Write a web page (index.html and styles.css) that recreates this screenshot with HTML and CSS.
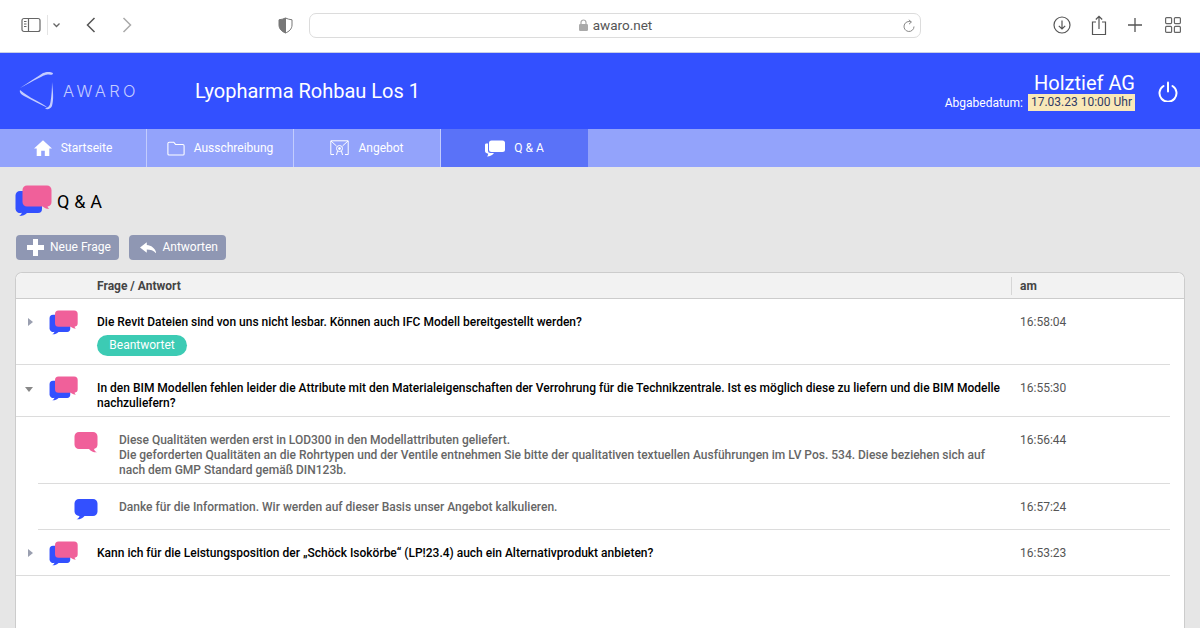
FILE: index.html
```html
<!DOCTYPE html>
<html lang="de">
<head>
<meta charset="utf-8">
<title>AWARO</title>
<link rel="stylesheet" href="styles.css">
</head>
<body>
<svg class="defs" width="0" height="0" aria-hidden="true">
  <defs>
    <symbol id="pink" viewBox="0 0 24 22"><path fill="#f0609a" d="M5 0h14a4.500 4.500 0 0 1 4.500 4.500v8a4.500 4.500 0 0 1-3.500 4.400c.3 1.400 1.400 2.600 3 3.400-3 .3-6-.8-8-3.300H5A4.500 4.500 0 0 1 .5 12.500v-8A4.500 4.500 0 0 1 5 0z"/></symbol>
    <symbol id="blue" viewBox="0 0 24 22"><path fill="#3350ff" d="M5 0h14a4.500 4.500 0 0 1 4.500 4.500v8A4.500 4.500 0 0 1 19 17h-8.500c-2 2.500-5 3.600-8 3.300 1.600-.8 2.700-2 3-3.400A4.500 4.500 0 0 1 .5 12.500v-8A4.500 4.500 0 0 1 5 0z"/></symbol>
    <symbol id="duo" viewBox="0 0 38 32">
      <path fill="#3350ff" d="M5 6h18a4 4 0 0 1 4 4v14a4 4 0 0 1-4 4H12c-2 2-5 3.200-8 3 1.500-.8 2.500-2 2.800-3.300A4.500 4.500 0 0 1 .5 24V10.500A4.500 4.500 0 0 1 5 6z"/>
      <path fill="#f0609a" d="M12 .5h20a4.500 4.500 0 0 1 4.500 4.500v12a4.500 4.500 0 0 1-4 4.400c.2 1 .8 1.700 1.800 2.400-2.500.2-4.800-.7-6.500-2.300H12A4.500 4.500 0 0 1 7.500 17V5A4.500 4.500 0 0 1 12 .5z"/>
    </symbol>
  </defs>
</svg>

<div class="browser">
  <div class="browser-left">
    <svg class="bi" width="20" height="16" viewBox="0 0 20 16" fill="none" stroke="#666" stroke-width="1.200"><rect x="1" y="1.500" width="18" height="13" rx="2"/><path d="M7.500 1.500v13"/><path d="M3 4.500h2.500M3 7h2.500M3 9.500h2.500" stroke-width="1"/></svg>
    <span class="bdiv"></span>
    <svg width="9" height="6" viewBox="0 0 9 6" fill="none" stroke="#666" stroke-width="1.300"><path d="M1.500 1.500 4.500 4.500 7.500 1.500"/></svg>
    <svg class="back" width="10" height="16" viewBox="0 0 10 16" fill="none" stroke="#555" stroke-width="1.500"><path d="M8.500 1 1.500 8l7 7"/></svg>
    <svg class="fwd" width="10" height="16" viewBox="0 0 10 16" fill="none" stroke="#aaa" stroke-width="1.500"><path d="M1.500 1l7 7-7 7"/></svg>
  </div>
  <svg class="shield" width="15" height="17" viewBox="0 0 15 17"><path fill="#777" stroke="#777" stroke-width="1" d="M7.500 1C5.500 2 3.500 2.500 1 2.800V8c0 4 3 6.500 6.500 8z"/><path fill="#fff" stroke="#777" stroke-width="1" d="M7.500 1c2 1 4 1.500 6.500 1.800V8c0 4-3 6.500-6.500 8z"/></svg>
  <div class="url">
    <span class="url-text"><svg class="lock" width="9" height="12" viewBox="0 0 9 12"><path fill="none" stroke="#aaa" stroke-width="1.200" d="M2 5.500V3.500a2.500 2.500 0 0 1 5 0v2"/><rect y="5" width="9" height="7" rx="1.200" fill="#aaa"/></svg>awaro.net</span>
    <svg class="reload" width="12" height="14" viewBox="0 0 12 14" fill="none" stroke="#888" stroke-width="1"><path d="M8.200 3A5 5 0 1 0 11 7.500"/><path d="M5.800 .8 8.400 3 6 5.200"/></svg>
  </div>
  <div class="browser-right">
    <svg class="ic-dl" width="18" height="18" viewBox="0 0 18 18" fill="none" stroke="#555" stroke-width="1.200"><circle cx="9" cy="9" r="8"/><path d="M9 4.500v8.500M5.800 9.800 9 13l3.200-3.200"/></svg>
    <svg class="ic-share" width="16" height="21" viewBox="0 0 16 21" fill="none" stroke="#555" stroke-width="1.200"><path d="M5 7H1.500v12.500h13V7H11"/><path d="M8 14V1.500M4.800 4.500 8 1.300l3.200 3.200"/></svg>
    <svg class="ic-plus" width="14" height="14" viewBox="0 0 14 14" fill="none" stroke="#555" stroke-width="1.300"><path d="M7 0v14M0 7h14"/></svg>
    <svg class="ic-grid" width="16" height="16" viewBox="0 0 16 16" fill="none" stroke="#666" stroke-width="1.200"><rect x=".6" y=".6" width="6" height="6" rx="1"/><rect x="9.400" y=".6" width="6" height="6" rx="1"/><rect x=".6" y="9.400" width="6" height="6" rx="1"/><rect x="9.400" y="9.400" width="6" height="6" rx="1"/></svg>
  </div>
</div>

<header class="app-header">
  <div class="logo">
    <svg width="36" height="40" viewBox="0 0 36 40" fill="#c4ccff"><path d="M1 17C10 11 18 6 24 2c3-1.500 8-1.500 10 0 0 2-2 2-4 1.500C26 3 22 6 1 17z"/><path d="M1 19c-1 3 2 5 6 7 7 4 14 7 22 11C22 31 10 27 1 19z"/><path d="M33 11c1 9 2 17 0 24-1 3-5 4-7 2.500 3-.5 5-2.500 5.500-6.500 1-6 1.500-13 1.500-20z"/></svg>
    <span class="logo-text">AWARO</span>
  </div>
  <h1 class="project">Lyopharma Rohbau Los 1</h1>
  <div class="company">
    <div class="company-name">Holztief AG</div>
    <div class="deadline"><span>Abgabedatum:</span><mark class="date">17.03.23 10:00 Uhr</mark></div>
  </div>
  <svg class="power" width="20" height="21" viewBox="0 0 20 21" fill="none" stroke="#fff" stroke-width="2" stroke-linecap="round"><path d="M10 1.500v9"/><path d="M5.500 5A8.500 8.500 0 1 0 14.500 5"/></svg>
</header>

<nav class="tabs">
  <a class="tab t1"><svg width="18" height="18" viewBox="0 0 20 18" fill="#fff"><path d="M10 .5 0 9.500h3V18h5v-6h4v6h5V9.500h3z"/></svg>Startseite</a>
  <a class="tab t2"><svg width="18" height="15" viewBox="0 0 20 16" fill="none" stroke="#fff" stroke-width="1.200"><path d="M1 14V2.500C1 1.500 1.500 1 2.500 1h5l2 2.500h8c1 0 1.500.5 1.500 1.500v9c0 .8-.5 1.300-1.300 1.300H2.300C1.500 15.300 1 14.800 1 14z"/></svg>Ausschreibung</a>
  <a class="tab t3"><svg width="19" height="16" viewBox="0 0 19 16" fill="none" stroke="#fff" stroke-width="1"><path d="M4 14.500H.8V.8h17.400v13.700H15M1 1l5.500 5M18 1l-5.500 5"/><circle cx="9.500" cy="8.500" r="3"/><circle cx="9.500" cy="8.500" r="1" fill="#fff"/><path d="M7.500 11l-1 4M11.500 11l1 4"/></svg>Angebot</a>
  <a class="tab t4 active"><svg width="20" height="17" viewBox="0 0 20 17" fill="#fff"><path d="M1.500 3.500H3v7A2.500 2.500 0 0 0 5.500 13H9c-1.500 2-4 3.400-7 3.500.8-.8 1.200-1.700 1.200-2.800C1.300 13.400 0 12.500 0 11V5c0-1 .5-1.500 1.500-1.500z"/><path d="M6.500 .5H17.500A2.500 2.500 0 0 1 20 3v6.500a2.500 2.500 0 0 1-2.500 2.500H6.500A2.500 2.500 0 0 1 4 9.500V3A2.500 2.500 0 0 1 6.500 .5z"/></svg>Q &amp; A</a>
</nav>

<main class="content">
  <div class="page-title">
    <svg class="title-icon" width="38" height="32"><use href="#duo"/></svg>
    <h2>Q &amp; A</h2>
  </div>
  <div class="actions">
    <button class="btn btn-new"><svg width="17" height="17" viewBox="0 0 17 17" fill="#fff"><path d="M6 0h5v6h6v5h-6v6H6v-6H0V6h6z"/></svg><span class="btn-label">Neue Frage</span></button>
    <button class="btn btn-reply"><svg width="17" height="12" viewBox="0 0 17 12" fill="#fff"><path d="M7 0 0 5.500 7 11V7.500c4 0 7.500 1 10 4.500-1-5-4.500-8.500-10-9z"/></svg><span class="btn-label">Antworten</span></button>
  </div>

  <section class="table">
    <div class="thead">
      <div class="th-q">Frage / Antwort</div>
      <div class="th-am">am</div>
    </div>

    <div class="row row-q row-1">
      <span class="caret right"></span>
      <svg class="duo" width="30" height="25"><use href="#duo"/></svg>
      <div class="q-body">
        <div class="q-text">Die Revit Dateien sind von uns nicht lesbar. Können auch IFC Modell bereitgestellt werden?</div>
        <span class="badge">Beantwortet</span>
      </div>
      <time class="time">16:58:04</time>
    </div>

    <div class="row row-q row-2">
      <span class="caret down"></span>
      <svg class="duo" width="30" height="25"><use href="#duo"/></svg>
      <div class="q-body">
        <div class="q-text">In den BIM Modellen fehlen leider die Attribute mit den Materialeigenschaften der Verrohrung für die Technikzentrale. Ist es möglich diese zu liefern und die BIM Modelle nachzuliefern?</div>
      </div>
      <time class="time">16:55:30</time>
    </div>

    <div class="row row-a row-3">
      <svg class="single" width="24" height="22"><use href="#pink"/></svg>
      <div class="a-text">Diese Qualitäten werden erst in LOD300 in den Modellattributen geliefert.<br>Die geforderten Qualitäten an die Rohrtypen und der Ventile entnehmen Sie bitte der qualitativen textuellen Ausführungen im LV Pos. 534. Diese beziehen sich auf nach dem GMP Standard gemäß DIN123b.</div>
      <time class="time">16:56:44</time>
    </div>

    <div class="row row-a row-4">
      <svg class="single" width="24" height="22"><use href="#blue"/></svg>
      <div class="a-text">Danke für die Information. Wir werden auf dieser Basis unser Angebot kalkulieren.</div>
      <time class="time">16:57:24</time>
    </div>

    <div class="row row-q row-5">
      <span class="caret right"></span>
      <svg class="duo" width="30" height="25"><use href="#duo"/></svg>
      <div class="q-body">
        <div class="q-text">Kann ich für die Leistungsposition der „Schöck Isokörbe“ (LP!23.4) auch ein Alternativprodukt anbieten?</div>
      </div>
      <time class="time">16:53:23</time>
    </div>
  </section>
</main>
</body>
</html>
```
FILE: styles.css
```css
* { box-sizing: border-box; }
html, body { margin: 0; height: 628px; overflow: hidden; }
body { font-family: Roboto, "Liberation Sans", sans-serif; background: #e6e6e6; color: #000; }
.defs { display: block; height: 0; }

.browser { height: 53px; background: #fff; border-bottom: 1px solid #c9cfe6; display: flex; align-items: center; padding: 0 19px 2px 21px; }
.browser-left { display: flex; align-items: center; width: 257px; }
.bdiv { width: 1px; height: 20px; background: #e4e4e4; margin: 0 4px 0 6px; }
.back { margin-left: 25px; }
.fwd { margin-left: 26px; }
.shield { flex: none; }
.url { width: 612px; height: 25px; margin-left: 16px; border: 1px solid #dcdcdc; border-radius: 7px; position: relative; display: flex; align-items: center; justify-content: center; font-size: 13.500px; color: #555; }
.url-text { display: flex; align-items: center; gap: 5px; margin-left: 1px; }
.reload { position: absolute; right: 5px; top: 5px; }
.browser-right { display: flex; align-items: center; margin-left: auto; }
.ic-share { margin-left: 20px; }
.ic-plus { margin-left: 21px; }
.ic-grid { margin-left: 23px; }

.app-header { height: 76px; background: #3350ff; color: #fff; display: flex; align-items: center; padding: 0 22px 0 19px; }
.logo { display: flex; align-items: center; width: 176px; gap: 8px; }
.logo-text { font-family: Inter, sans-serif; font-size: 16.500px; letter-spacing: 3.300px; color: #c4ccff; font-weight: 300; }
.project { margin: 0; font-size: 20px; font-weight: 400; }
.company { margin-left: auto; display: flex; flex-direction: column; align-items: flex-end; margin-right: 23px; margin-top: 1px; }
.company-name { font-size: 20px; line-height: 22px; }
.deadline { display: flex; align-items: center; font-size: 12px; gap: 5px; }
.date { background: #f9e8b8; color: #2f3a66; padding: 0 3px; line-height: 17px; font-size: 12px; }

.tabs { height: 38px; background: #93a3fb; display: flex; }
.tab { display: flex; align-items: center; justify-content: center; gap: 9px; color: #fff; font-size: 12px; border-right: 1px solid #c3ccfd; }
.t1 { width: 147px; }
.t2 { width: 147px; }
.t3 { width: 147px; }
.t4 { width: 147px; border-right: 0; }
.active { background: #5a72f8; }

.content { padding: 0 15px; }
.page-title { display: flex; align-items: center; height: 68px; }
.page-title h2 { margin: 1px 0 0 4px; font-size: 18px; font-weight: 400; letter-spacing: .2px; }
.actions { display: flex; gap: 10px; padding-left: 1px; height: 25px; }
.btn { height: 25px; border: 0; border-radius: 4px; background: #8f97b3; color: #fff; font: 400 12px Roboto, sans-serif; display: flex; align-items: center; gap: 6px; padding: 0 8px 0 11px; }
.btn-label { margin-top: -2px; }
.btn-new { width: 103px; }
.btn-reply { width: 97px; }

.table { margin-top: 12px; height: 356px; background: #fff; border: 1px solid #ccc; border-bottom: 0; border-radius: 7px 7px 0 0; }
.thead { height: 26px; background: #f2f2f2; border-bottom: 1px solid #ccc; border-radius: 7px 7px 0 0; display: flex; align-items: center; font-size: 12px; font-weight: 700; color: #444; }
.th-q { width: 995px; padding-left: 81px; }
.th-am { padding-left: 8px; border-left: 1px solid #d6d6d6; height: 18px; line-height: 18px; }

.row { display: flex; align-items: flex-start; font-size: 12px; line-height: 15px; border-bottom: 1px solid #dcdcdc; margin-right: 14px; position: relative; }
.row-q { padding-left: 33px; }
.caret { width: 0; height: 0; position: absolute; }
.caret.right { left: 12px; border-left: 5px solid #9a9fb0; border-top: 4px solid transparent; border-bottom: 4px solid transparent; }
.caret.down { left: 9px; border-top: 5px solid #888; border-left: 4.500px solid transparent; border-right: 4.500px solid transparent; }
.duo { flex: none; margin-top: -5px; }
.q-body { margin-left: 18px; width: 923px; }
.q-text { color: #000; font-weight: 500; }
.time { color: #555; position: absolute; left: 1004px; top: 16px; }
.badge { display: inline-block; margin-top: 5px; height: 21px; line-height: 21px; width: 90px; text-align: center; border-radius: 11px; background: #3ccbb4; color: #fff; font-size: 12px; }

.row-1 { height: 66px; padding-top: 16px; }
.row-1 .caret { top: 19px; }
.row-2 { height: 52px; padding-top: 16px; }
.row-2 .caret { top: 22px; }
.row-5 { height: 46px; padding-top: 16px; }
.row-5 .caret { top: 19px; }

.row-a { margin-left: 22px; padding-left: 36px; }
.a-text { margin-left: 21px; width: 872px; color: #666; font-weight: 500; }
.row-3 { height: 67px; padding-top: 16px; }
.row-4 { height: 46px; padding-top: 16px; }
.single { margin-top: -1px; flex: none; }
.row-a .time { left: 982px; }
```
